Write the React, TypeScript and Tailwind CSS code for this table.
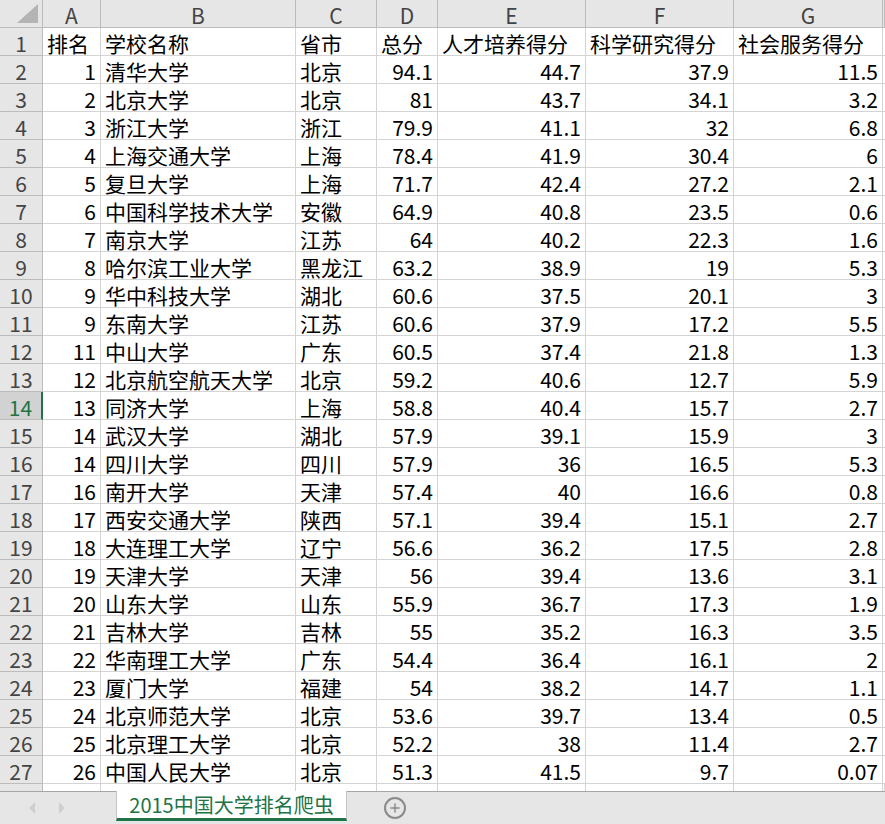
import { Plus } from "lucide-react"

type Row = [string, string, string, string, string, string, string]

const rows: Row[] = [
  ["1", "清华大学", "北京", "94.1", "44.7", "37.9", "11.5"],
  ["2", "北京大学", "北京", "81", "43.7", "34.1", "3.2"],
  ["3", "浙江大学", "浙江", "79.9", "41.1", "32", "6.8"],
  ["4", "上海交通大学", "上海", "78.4", "41.9", "30.4", "6"],
  ["5", "复旦大学", "上海", "71.7", "42.4", "27.2", "2.1"],
  ["6", "中国科学技术大学", "安徽", "64.9", "40.8", "23.5", "0.6"],
  ["7", "南京大学", "江苏", "64", "40.2", "22.3", "1.6"],
  ["8", "哈尔滨工业大学", "黑龙江", "63.2", "38.9", "19", "5.3"],
  ["9", "华中科技大学", "湖北", "60.6", "37.5", "20.1", "3"],
  ["9", "东南大学", "江苏", "60.6", "37.9", "17.2", "5.5"],
  ["11", "中山大学", "广东", "60.5", "37.4", "21.8", "1.3"],
  ["12", "北京航空航天大学", "北京", "59.2", "40.6", "12.7", "5.9"],
  ["13", "同济大学", "上海", "58.8", "40.4", "15.7", "2.7"],
  ["14", "武汉大学", "湖北", "57.9", "39.1", "15.9", "3"],
  ["14", "四川大学", "四川", "57.9", "36", "16.5", "5.3"],
  ["16", "南开大学", "天津", "57.4", "40", "16.6", "0.8"],
  ["17", "西安交通大学", "陕西", "57.1", "39.4", "15.1", "2.7"],
  ["18", "大连理工大学", "辽宁", "56.6", "36.2", "17.5", "2.8"],
  ["19", "天津大学", "天津", "56", "39.4", "13.6", "3.1"],
  ["20", "山东大学", "山东", "55.9", "36.7", "17.3", "1.9"],
  ["21", "吉林大学", "吉林", "55", "35.2", "16.3", "3.5"],
  ["22", "华南理工大学", "广东", "54.4", "36.4", "16.1", "2"],
  ["23", "厦门大学", "福建", "54", "38.2", "14.7", "1.1"],
  ["24", "北京师范大学", "北京", "53.6", "39.7", "13.4", "0.5"],
  ["25", "北京理工大学", "北京", "52.2", "38", "11.4", "2.7"],
  ["26", "中国人民大学", "北京", "51.3", "41.5", "9.7", "0.07"],
]

const cols = ["A", "B", "C", "D", "E", "F", "G", ""]
const grid = "grid grid-cols-[43px_58px_195px_81px_61px_148px_148px_149px_1fr] h-[28px] shrink-0"
const cell = "border-r border-b border-[#d4d4d4] flex items-center pt-[3px] px-[4px] whitespace-nowrap"
const num = cell + " justify-end"
const hdr = "bg-[#e6e6e6] border-r border-b border-[#bcbcbc] flex items-center justify-center pt-[3px] text-[#444]"

export default function App() {
  return (
    <div className="w-[885px] h-[824px] flex flex-col bg-white overflow-hidden font-['Noto_Sans_CJK_SC',sans-serif] text-[21px] leading-[24px] text-black">
      <div className="flex-1 flex flex-col overflow-hidden">
        {/* column letters */}
        <div className={grid}>
          <div className="bg-[#e6e6e6] border-r border-b border-[#bcbcbc] flex items-end justify-end pr-[4px] pb-[4px]">
            <svg width="21" height="19" viewBox="0 0 21 19">
              <polygon points="21,0 21,19 0,19" fill="#b4b4b4" />
            </svg>
          </div>
          {cols.map((c, i) => (
            <div key={i} className={hdr}>{c}</div>
          ))}
        </div>
        {/* field names */}
        <div className={grid}>
          <div className={hdr}>1</div>
          <div className={cell}>排名</div>
          <div className={cell}>学校名称</div>
          <div className={cell}>省市</div>
          <div className={cell}>总分</div>
          <div className={cell}>人才培养得分</div>
          <div className={cell}>科学研究得分</div>
          <div className={cell}>社会服务得分</div>
          <div className={cell}></div>
        </div>
        {rows.map((r, i) => {
          const sel = i + 2 === 14
          return (
            <div key={i} className={grid}>
              {sel ? (
                <div className="bg-[#d2d2d2] border-r-2 border-r-[#217346] border-b border-b-[#bcbcbc] flex items-center justify-center pt-[3px] text-[#217346]">
                  {i + 2}
                </div>
              ) : (
                <div className={hdr}>{i + 2}</div>
              )}
              <div className={num}>{r[0]}</div>
              <div className={cell}>{r[1]}</div>
              <div className={cell}>{r[2]}</div>
              <div className={num}>{r[3]}</div>
              <div className={num}>{r[4]}</div>
              <div className={num}>{r[5]}</div>
              <div className={num}>{r[6]}</div>
              <div className={cell}></div>
            </div>
          )
        })}
        {/* next row, mostly hidden behind the tab strip */}
        <div className={grid}>
          <div className="bg-[#e6e6e6] border-r border-[#bcbcbc]"></div>
          {cols.map((_, i) => (
            <div key={i} className="border-r border-[#d4d4d4]"></div>
          ))}
        </div>
      </div>
      {/* sheet tabs */}
      <div className="h-[33px] shrink-0 bg-[#e6e6e6] border-t border-[#a6a6a6] flex items-start">
        <div className="w-[116px] h-full flex items-center pl-[27px] gap-[20px]">
          <svg width="10" height="14" viewBox="0 0 10 14">
            <polygon points="8,1 2,7 8,13" fill="#cfcfcf" />
          </svg>
          <svg width="10" height="14" viewBox="0 0 10 14">
            <polygon points="2,1 8,7 2,13" fill="#cfcfcf" />
          </svg>
        </div>
        <div className="mt-[-1px] w-[231px] h-[30px] bg-white border-x border-[#c6c6c6] border-b-[3px] border-b-[#217346] flex items-center justify-center text-[#217346] text-[20px] leading-none">
          2015中国大学排名爬虫
        </div>
        <div className="ml-[37px] h-full flex items-center">
          <div className="w-[22px] h-[22px] rounded-full border-2 border-[#8a8a8a] flex items-center justify-center">
            <Plus size={14} strokeWidth={2.5} color="#8a8a8a" />
          </div>
        </div>
      </div>
    </div>
  )
}
